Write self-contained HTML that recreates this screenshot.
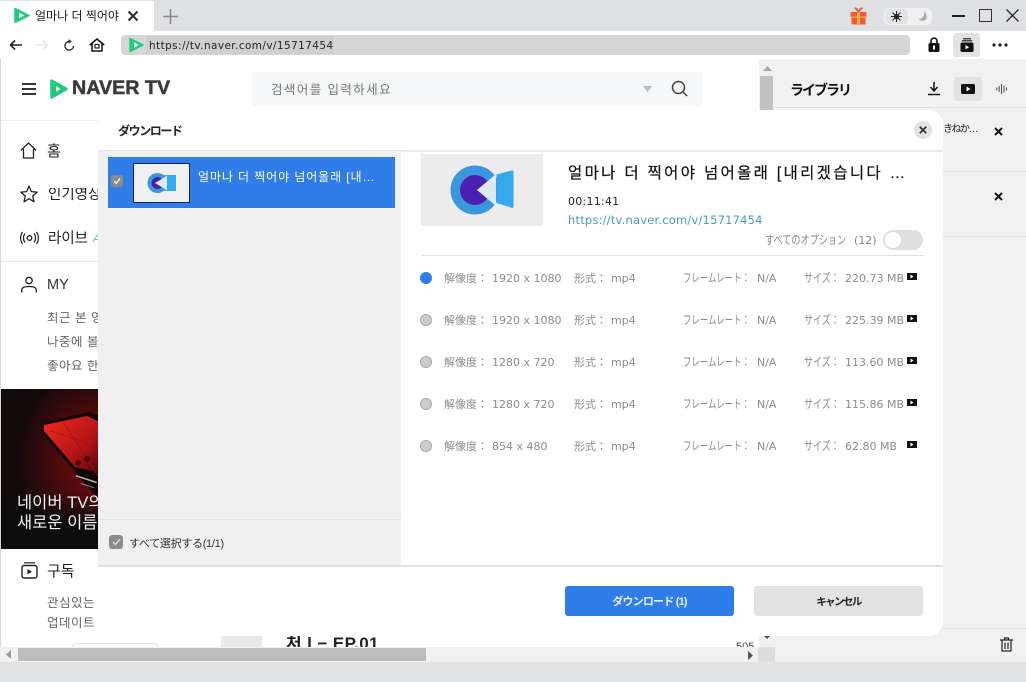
<!DOCTYPE html>
<html><head><meta charset="utf-8">
<style>
html,body{margin:0;padding:0;width:1026px;height:682px;overflow:hidden;background:#fff}
body{position:relative;font-family:"Liberation Sans","Noto Sans CJK KR",sans-serif;color:#222}
.a{position:absolute}
.t{position:absolute;white-space:nowrap;line-height:1}
.jp{font-family:"Liberation Sans","Noto Sans CJK JP",sans-serif}
svg{position:absolute;overflow:visible}
.g{color:#8c8c8c;font-size:11px;font-family:"DejaVu Sans","Noto Sans CJK JP",sans-serif}
.f{font-size:12px;transform-origin:left;transform:scaleX(.7)}
.s{font-size:12px;transform-origin:left;transform:scaleX(.75)}
</style></head><body>

<!-- tab bar -->
<div class="a" style="left:0;top:0;width:1026px;height:31px;background:#dfe0e2"></div>
<div class="a" style="left:0;top:1px;width:154px;height:30px;background:#fff"></div>
<svg style="left:14px;top:7px" width="16" height="17" viewBox="0 0 16 17"><path d="M1 1.5 15 8.5 1 15.5Z" fill="#1fcb78" stroke="#1fcb78" stroke-width="1.5" stroke-linejoin="round"/><path d="M5 5.5 10.5 8.5 5 11.5Z" fill="#fff"/></svg>
<div class="t" style="left:35px;top:10px;font-size:12px;color:#222">얼마나 더 찍어야</div>
<svg style="left:127px;top:10px" width="12" height="12"><path d="M1.5 1.5 10.5 10.5M10.5 1.5 1.5 10.5" stroke="#333" stroke-width="2.2"/></svg>
<svg style="left:163px;top:9px" width="15" height="15"><path d="M7.5 0V15M0 7.5H15" stroke="#8a8a8a" stroke-width="1.5"/></svg>
<!-- gift -->
<svg style="left:850px;top:7px" width="17" height="18"><rect x="0.5" y="5" width="16" height="4.5" fill="#f05a3c"/><rect x="1.5" y="10.5" width="14" height="7" fill="#f05a3c"/><rect x="7" y="5" width="3" height="13" fill="#f5b13d"/><rect x="1" y="9.5" width="15" height="1.2" fill="#f5b13d"/><path d="M8.5 5C5 1 4.5 1 5.5 1S8 3 8.5 5C9 3 11 1 12 1S12 1 8.5 5Z" fill="none" stroke="#f05a3c" stroke-width="1.2"/></svg>
<!-- theme toggle -->
<div class="a" style="left:884px;top:8px;width:48px;height:17px;background:#f0f0f2;border-radius:5px"></div>
<div class="a" style="left:886px;top:9px;width:22px;height:15px;background:#e2e3e5;border-radius:4px"></div>
<svg style="left:891px;top:11px" width="11" height="11" viewBox="0 0 11 11"><circle cx="5.5" cy="5.5" r="2.6" fill="#222"/><path d="M5.5 0V11M0 5.5H11M1.6 1.6 9.4 9.4M9.4 1.6 1.6 9.4" stroke="#222" stroke-width="1"/></svg>
<svg style="left:918px;top:11px" width="9" height="11" viewBox="0 0 9 11"><path d="M6 .5C7 4 5 7.5 .8 8 3 11 8.5 10.5 8.7 6 8.8 3.500 7.500 1.300 6 .5Z" fill="#aaa"/></svg>
<!-- win controls -->
<div class="a" style="left:952px;top:15px;width:13px;height:1.500px;background:#222"></div>
<div class="a" style="left:979px;top:9px;width:11px;height:11px;border:1.500px solid #333"></div>
<svg style="left:1006px;top:9px" width="13" height="13"><path d="M.5.5 12.500 12.500M12.500.5 .5 12.500" stroke="#222" stroke-width="1.300"/></svg>

<!-- toolbar -->
<svg style="left:9px;top:39px" width="13" height="12"><path d="M13 6H1.500M6 1.500 1.500 6 6 10.500" fill="none" stroke="#222" stroke-width="1.600"/></svg>
<svg style="left:36px;top:39px" width="13" height="12"><path d="M0 6H11.500M7 1.500 11.500 6 7 10.500" fill="none" stroke="#e8e8e8" stroke-width="1.600"/></svg>
<svg style="left:63px;top:39px" width="12" height="13" viewBox="0 0 12 13"><path d="M6.500 2.500A4.300 4.300 0 1 0 10.500 7" fill="none" stroke="#333" stroke-width="1.400"/><path d="M5.500 0 9 2.500 5.500 4.800Z" fill="#333"/></svg>
<svg style="left:89px;top:38px" width="16" height="14" viewBox="0 0 16 14"><path d="M.8 7 8 1 15.200 7M3 5.500V13H13V5.500" fill="none" stroke="#111" stroke-width="1.500"/><rect x="6" y="6.500" width="4" height="3.500" fill="none" stroke="#111" stroke-width="1.100"/></svg>
<div class="a" style="left:121px;top:35px;width:789px;height:20px;background:#d6d6d6;border-radius:4px"></div>
<div class="a" style="left:146px;top:36px;width:188px;height:18px;background:#cfcfcf"></div>
<svg style="left:129px;top:37px" width="15" height="16" viewBox="0 0 15 16"><path d="M1 1.500 14 8 1 14.500Z" fill="#1fcb78" stroke="#1fcb78" stroke-width="1.500" stroke-linejoin="round"/><path d="M5 5 9.800 8 5 11Z" fill="#dff7ea"/></svg>
<div class="t" style="left:149px;top:40px;font-size:11px;letter-spacing:.45px;color:#222;font-family:'DejaVu Sans',sans-serif;transform-origin:left;transform:scaleX(.95)">https://tv.naver.com/v/15717454</div>
<svg style="left:928px;top:37px" width="12" height="15" viewBox="0 0 12 15"><path d="M3 6.500V4A3 3 0 0 1 9 4V6.500" fill="none" stroke="#111" stroke-width="1.600"/><rect x=".5" y="6" width="11" height="9" rx="1.500" fill="#111"/><rect x="5" y="8.500" width="2" height="4" fill="#fff"/></svg>
<div class="a" style="left:953px;top:33px;width:27px;height:24px;background:#e3e3e3;border-radius:3px"></div>
<svg style="left:960px;top:38px" width="14" height="14" viewBox="0 0 14 14"><path d="M3 .8H11M1.800 2.800H12.200" stroke="#111" stroke-width="1.100"/><rect x=".5" y="4.500" width="13" height="9.500" rx="1.500" fill="#111"/><path d="M5.500 7 9 9.200 5.500 11.400Z" fill="#fff"/></svg>
<svg style="left:992px;top:43px" width="16" height="4"><circle cx="2" cy="2" r="1.600" fill="#222"/><circle cx="8" cy="2" r="1.600" fill="#222"/><circle cx="14" cy="2" r="1.600" fill="#222"/></svg>

<!-- page -->
<div class="a" style="left:0;top:59px;width:1px;height:588px;background:#d8d8d8"></div>
<div class="a" style="left:22px;top:83px;width:14px;height:1.500px;background:#333;box-shadow:0 5px 0 #333,0 10px 0 #333"></div>
<svg style="left:50px;top:79px" width="18" height="20" viewBox="0 0 18 20"><path d="M1.500 1.500 16.500 10 1.500 18.500Z" fill="#1fcb78" stroke="#1fcb78" stroke-width="2.500" stroke-linejoin="round"/><path d="M6 7 10.500 10 6 13Z" fill="#fff"/></svg>
<div class="t" style="left:72px;top:79px;font-size:19.700px;font-weight:bold;color:#3a3a3a;-webkit-text-stroke:.5px #3a3a3a">NAVER TV</div>
<div class="a" style="left:252px;top:72px;width:450px;height:34px;background:#f6f7f8"></div>
<div class="t" style="left:271px;top:84px;font-size:12.500px;color:#777;letter-spacing:1.400px">검색어를 입력하세요</div>
<svg style="left:643px;top:86px" width="9" height="6"><path d="M0 0H9L4.500 6Z" fill="#bbb"/></svg>
<svg style="left:671px;top:80px" width="17" height="17"><circle cx="7.500" cy="7.500" r="6" fill="none" stroke="#444" stroke-width="1.500"/><path d="M12 12 16 16" stroke="#444" stroke-width="1.500"/></svg>
<div class="a" style="left:1px;top:120px;width:97px;height:1px;background:#eee"></div>

<svg style="left:20px;top:142px" width="17" height="17" viewBox="0 0 17 17"><path d="M.8 8.500 8.500 1 16.200 8.500M3.500 7V16H13.500V7" fill="none" stroke="#222" stroke-width="1.300"/></svg>
<div class="t" style="left:47px;top:144px;font-size:15px;color:#222">홈</div>
<svg style="left:20px;top:185px" width="18" height="18" viewBox="0 0 18 18"><path d="M9 1 11.300 6.600 17.200 7.100 12.700 11 14 16.800 9 13.700 4 16.800 5.300 11 .8 7.100 6.700 6.600Z" fill="none" stroke="#222" stroke-width="1.300" stroke-linejoin="round"/></svg>
<div class="t" style="left:48px;top:188px;font-size:14.500px;color:#222;width:50px;overflow:hidden">인기영상</div>
<svg style="left:20px;top:231px" width="19" height="14" viewBox="0 0 19 14"><circle cx="9.500" cy="7" r="2.300" fill="none" stroke="#222" stroke-width="1.300"/><path d="M5 2.500C3 5 3 9 5 11.500M14 2.500C16 5 16 9 14 11.500M2.500 1C0 4.500 0 9.500 2.500 13M16.500 1C19 4.500 19 9.500 16.500 13" fill="none" stroke="#222" stroke-width="1.200"/></svg>
<div class="t" style="left:48px;top:232px;font-size:14.500px;color:#222">라이브</div>
<div class="t" style="left:93px;top:234px;font-size:11px;color:#3fce8f;font-style:italic">A</div>
<div class="a" style="left:1px;top:261px;width:97px;height:1px;background:#e8e8e8"></div>
<svg style="left:21px;top:276px" width="16" height="17" viewBox="0 0 16 17"><circle cx="8" cy="4.500" r="3.200" fill="none" stroke="#222" stroke-width="1.300"/><path d="M.8 16.500V14C.8 11.500 3 10.500 8 10.500S15.200 11.500 15.200 14V16.500" fill="none" stroke="#222" stroke-width="1.300"/></svg>
<div class="t" style="left:47px;top:278px;font-size:14.500px;color:#333">MY</div>
<div class="t" style="left:47px;top:312px;font-size:12.500px;color:#666;letter-spacing:.5px;width:51px;overflow:hidden">최근 본 영상</div>
<div class="t" style="left:47px;top:336px;font-size:12.500px;color:#666;letter-spacing:.5px;width:51px;overflow:hidden">나중에 볼 영상</div>
<div class="t" style="left:47px;top:360px;font-size:12.500px;color:#666;letter-spacing:.5px;width:51px;overflow:hidden">좋아요 한 영상</div>

<!-- promo -->
<div class="a" style="left:1px;top:389px;width:97px;height:160px;overflow:hidden;background:radial-gradient(ellipse 80px 95px at 95px 70px,#7d0d13 0%,#4a0a0e 50%,#120a0b 100%)">
  <svg style="left:0;top:0" width="97" height="160" viewBox="0 0 97 160">
    <defs><linearGradient id="sc" x1="0" y1="0" x2="1" y2="1"><stop offset="0" stop-color="#f22a1e"/><stop offset=".65" stop-color="#b01316"/><stop offset="1" stop-color="#4a070b"/></linearGradient></defs>
    <path d="M40 34 88 23 99 27V108L92 104 41 44Z" fill="#120607"/>
    <path d="M43 36 86 27 99 33V84L74 78 43 42Z" fill="url(#sc)"/>
    <path d="M50 42 99 58M62 33 99 90" stroke="#9a1014" stroke-width=".6" fill="none"/>
    <circle cx="77" cy="74" r="3" fill="#4d0a0d"/><circle cx="86" cy="70" r="3" fill="#4d0a0d"/>
    <rect x="75" y="86" width="22" height="1.500" fill="#b5b5b5" transform="rotate(18 75 86)"/>
    <rect x="80" y="94" width="14" height="1" fill="#888" transform="rotate(18 80 94)"/>
  </svg>
  <div class="a" style="left:0;top:105px;width:97px;height:55px;background:linear-gradient(rgba(15,10,10,0),#0c0c0c 60%)"></div>
  <div class="t" style="left:16px;top:106px;font-size:16.500px;color:#f2f2f2">네이버 TV의</div>
  <div class="t" style="left:16px;top:126px;font-size:16.500px;color:#f2f2f2">새로운 이름</div>
</div>

<svg style="left:21px;top:562px" width="17" height="17" viewBox="0 0 17 17"><path d="M3 .8H14" stroke="#222" stroke-width="1.200"/><rect x="1" y="3.500" width="15" height="12.500" rx="2" fill="none" stroke="#222" stroke-width="1.400"/><path d="M6.500 7 11 9.700 6.500 12.400Z" fill="#222"/></svg>
<div class="t" style="left:47px;top:564px;font-size:15px;color:#222">구독</div>
<div class="t" style="left:47px;top:597px;font-size:12.500px;color:#666;letter-spacing:.5px;width:47px;overflow:hidden">관심있는 채널</div>
<div class="t" style="left:47px;top:617px;font-size:12.500px;color:#666;letter-spacing:.5px;width:47px;overflow:hidden">업데이트 소식</div>
<div class="a" style="left:72px;top:643px;width:84px;height:4px;border:1px solid #e5e5e5;border-bottom:0;border-radius:4px 4px 0 0"></div>
<div class="a" style="left:221px;top:636px;width:41px;height:11px;background:#e9e9e9"></div>
<div class="a" style="left:286px;top:636px;width:110px;height:11px;overflow:hidden"><div class="t" style="left:0;top:-1px;font-size:17px;font-weight:bold;color:#222;letter-spacing:.4px">처 l − EP.01</div></div>
<div class="a" style="left:736px;top:642px;width:22px;height:5px;overflow:hidden"><div class="t" style="left:0;top:0;font-size:11px;color:#444">505</div></div>

<!-- scrollbars -->
<div class="a" style="left:0;top:647px;width:759px;height:15px;background:#f1f1f1"></div>
<div class="a" style="left:18px;top:648px;width:408px;height:13px;background:#bdbdbd"></div>
<svg style="left:6px;top:650px" width="5" height="9"><path d="M5 0V9L0 4.500Z" fill="#999"/></svg>
<svg style="left:748px;top:651px" width="5" height="9"><path d="M0 0V9L5 4.500Z" fill="#555"/></svg>
<div class="a" style="left:759px;top:59px;width:16px;height:588px;background:#f1f1f1"></div>
<svg style="left:763px;top:66px" width="9" height="5"><path d="M0 5H9L4.500 0Z" fill="#aaa"/></svg>
<div class="a" style="left:760px;top:76px;width:13px;height:40px;background:#c1c1c1"></div>
<svg style="left:763px;top:635px" width="8" height="4"><path d="M0 0H8L4 4Z" fill="#555"/></svg>
<div class="a" style="left:758px;top:647px;width:17px;height:15px;background:#dcdcdc"></div>

<!-- right panel -->
<div class="a" style="left:775px;top:59px;width:251px;height:603px;background:#f1f1f1"></div>
<div class="a" style="left:775px;top:107px;width:251px;height:1px;background:#e0e0e0"></div>
<div class="a" style="left:943px;top:171px;width:83px;height:1px;background:#e0e0e0"></div>
<div class="a" style="left:943px;top:236px;width:83px;height:1px;background:#e0e0e0"></div>
<div class="a" style="left:775px;top:628px;width:251px;height:1px;background:#e0e0e0"></div>
<div class="t jp" style="left:790px;top:83px;font-size:14px;font-weight:bold;color:#111;letter-spacing:-2px">ライブラリ</div>
<svg style="left:928px;top:82px" width="12" height="14"><path d="M6 0V8M2.500 5 6 9 9.500 5" fill="none" stroke="#111" stroke-width="1.500"/><path d="M0 12.500H12" stroke="#111" stroke-width="1.500"/></svg>
<div class="a" style="left:954px;top:77px;width:28px;height:24px;background:#e3e3e3;border-radius:2px"></div>
<svg style="left:961px;top:84px" width="14" height="10"><rect width="14" height="10" rx="1.500" fill="#111"/><path d="M5.500 2.500 9.500 5 5.500 7.500Z" fill="#fff"/></svg>
<svg style="left:996px;top:83px" width="12" height="12"><path d="M.8 4.500V7.500M3.200 3V9M5.500 1V11M8 2.500V9.500M10.500 4.500V7.500" stroke="#555" stroke-width="1.100"/></svg>
<div class="t jp" style="left:943px;top:125px;font-size:10px;color:#222;letter-spacing:-1.500px">きねか…</div>
<svg style="left:994px;top:127px" width="9" height="9"><path d="M1 1 8 8M8 1 1 8" stroke="#111" stroke-width="2"/></svg>
<svg style="left:994px;top:192px" width="9" height="9"><path d="M1 1 8 8M8 1 1 8" stroke="#111" stroke-width="2"/></svg>
<svg style="left:1000px;top:637px" width="13" height="15" viewBox="0 0 13 15"><path d="M0 3H13M4.500 3V1H8.500V3M2 3.500V14H11V3.500M5 5.500V12M8 5.500V12" fill="none" stroke="#222" stroke-width="1.200"/></svg>

<!-- status bar -->
<div class="a" style="left:0;top:662px;width:1026px;height:20px;background:#e1e2e4"></div>

<!-- modal -->
<div class="a" style="left:98px;top:110px;width:845px;height:526px;background:#fff;border-radius:0 14px 14px 0;overflow:hidden">
  <div class="a" style="left:0;top:40px;width:845px;height:1px;background:#e4e8ec"></div>
  <div class="a" style="left:0;top:41px;width:303px;height:414px;background:#f0f0f0"></div>
  <div class="a" style="left:0;top:455px;width:845px;height:1.500px;background:#e2e2e2"></div>
  <div class="a" style="left:0;top:409px;width:303px;height:1px;background:#e3e3e3"></div>
  <div class="a" style="left:303px;top:41px;width:542px;height:1px;background:#e8e8e8"></div>
</div>
<div class="t jp" style="left:118px;top:125px;font-size:12px;font-weight:bold;color:#222;letter-spacing:-1.400px">ダウンロード</div>
<div class="a" style="left:914px;top:121px;width:18px;height:18px;border-radius:50%;background:#e2e2e2"></div>
<svg style="left:919px;top:126px" width="8" height="8"><path d="M.8.8 7.200 7.200M7.200.8 .8 7.200" stroke="#333" stroke-width="1.800"/></svg>

<!-- list item -->
<div class="a" style="left:108px;top:157px;width:287px;height:51px;background:#2f7de8"></div>
<div class="a" style="left:111px;top:175px;width:12px;height:12px;background:#8a8a8a;border-radius:2px"></div>
<svg style="left:113px;top:177px" width="8" height="8"><path d="M1 4 3.200 6.500 7 1.500" fill="none" stroke="#fff" stroke-width="1.300"/></svg>
<div class="a" style="left:133px;top:163px;width:55px;height:38px;background:#eef0f2;border:1.500px solid #14225e"></div>
<svg style="left:147px;top:172px" width="30" height="22" viewBox="0 0 30 22"><rect x="17" y="3" width="12" height="16" rx="1" fill="#35a8ee"/><path d="M29 3 16 11 29 19Z" fill="#35a8ee"/><circle cx="10.500" cy="11" r="10" fill="#3a97dc"/><circle cx="10.500" cy="11" r="6" fill="#4a20b0"/><path d="M8 11 22 2.500V19.500Z" fill="#dfe9f3"/><rect x="20" y="3" width="9" height="16" rx="1" fill="#35a8ee"/></svg>
<div class="t" style="left:198px;top:171px;font-size:12px;color:#fff;letter-spacing:.9px">얼마나 더 찍어야 넘어올래 [내…</div>

<!-- select all -->
<div class="a" style="left:109px;top:535px;width:14px;height:14px;background:#8c8c8c;border-radius:3px"></div>
<svg style="left:112px;top:538px" width="9" height="8"><path d="M1 4 3.500 6.500 8 1" fill="none" stroke="#e8e8e8" stroke-width="1.200"/></svg>
<div class="t jp" style="left:129px;top:539px;font-size:11px;color:#333;letter-spacing:-.3px">すべて選択する(1/1)</div>

<!-- detail -->
<div class="a" style="left:421px;top:154px;width:122px;height:72px;background:#ececec"></div>
<svg style="left:450px;top:165px" width="64" height="50" viewBox="0 0 64 50"><path d="M62 5.500C63 5 63.500 6 63.500 7V41C63.500 43 62.500 43.500 61 42.500L42 31V17Z" fill="#35a8ee"/><circle cx="25" cy="25" r="24.500" fill="#3a97dc"/><circle cx="25" cy="25" r="15" fill="#4a20b0"/><path d="M27 25 46 9 V41Z" fill="#dfe9f3"/><path d="M46.500 9.500 61.500 5.500 63.500 7V41L61 42.500 46.500 38Z" fill="#35a8ee"/></svg>
<div class="t" style="left:568px;top:166px;font-size:15.500px;color:#111;letter-spacing:2.320px;-webkit-text-stroke:.2px #111">얼마나 더 찍어야 넘어올래 [내리겠습니다 …</div>
<div class="t" style="left:568px;top:196px;font-size:11px;color:#222;font-family:'DejaVu Sans',sans-serif;letter-spacing:.25px">00:11:41</div>
<div class="t" style="left:568px;top:215px;font-size:11.500px;color:#4a9cbc;font-family:'DejaVu Sans',sans-serif;letter-spacing:.2px">https://tv.naver.com/v/15717454</div>
<div class="t jp" style="left:765px;top:234px;font-size:12px;color:#888;transform-origin:left;transform:scaleX(.76)">すべてのオプション</div>
<div class="t" style="left:854px;top:235px;font-size:11px;color:#888;font-family:'DejaVu Sans',sans-serif">(12)</div>
<div class="a" style="left:883px;top:230px;width:40px;height:20px;background:#dedede;border-radius:10px"></div>
<div class="a" style="left:885px;top:232px;width:16px;height:16px;background:#fff;border-radius:50%"></div>
<div class="a" style="left:421px;top:255px;width:503px;height:1px;background:#e0e0e0"></div>

<!-- rows -->
<div class="a" style="left:420px;top:272px;width:12px;height:12px;background:#2f7de8;border-radius:50%"></div>
<div class="t g" style="left:444px;top:273px">解像度：</div><div class="t g" style="left:492px;top:273px">1920 x 1080</div><div class="t g" style="left:574px;top:273px">形式：</div><div class="t g" style="left:611px;top:273px">mp4</div><div class="t g f" style="left:683px;top:272px">フレームレート：</div><div class="t g" style="left:757px;top:273px">N/A</div><div class="t g s" style="left:804px;top:272px">サイズ：</div><div class="t g" style="left:845px;top:273px">220.73 MB</div>
<svg style="left:907px;top:273px" width="10" height="7"><rect width="10" height="7" fill="#111"/><path d="M3.500 1.500 6.500 3.500 3.500 5.500Z" fill="#fff"/></svg>

<div class="a" style="left:420px;top:314px;width:10px;height:10px;background:#ccc;border:1px solid #aaa;border-radius:50%"></div>
<div class="t g" style="left:444px;top:315px">解像度：</div><div class="t g" style="left:492px;top:315px">1920 x 1080</div><div class="t g" style="left:574px;top:315px">形式：</div><div class="t g" style="left:611px;top:315px">mp4</div><div class="t g f" style="left:683px;top:314px">フレームレート：</div><div class="t g" style="left:757px;top:315px">N/A</div><div class="t g s" style="left:804px;top:314px">サイズ：</div><div class="t g" style="left:845px;top:315px">225.39 MB</div>
<svg style="left:907px;top:315px" width="10" height="7"><rect width="10" height="7" fill="#111"/><path d="M3.500 1.500 6.500 3.500 3.500 5.500Z" fill="#fff"/></svg>

<div class="a" style="left:420px;top:356px;width:10px;height:10px;background:#ccc;border:1px solid #aaa;border-radius:50%"></div>
<div class="t g" style="left:444px;top:357px">解像度：</div><div class="t g" style="left:492px;top:357px">1280 x 720</div><div class="t g" style="left:574px;top:357px">形式：</div><div class="t g" style="left:611px;top:357px">mp4</div><div class="t g f" style="left:683px;top:356px">フレームレート：</div><div class="t g" style="left:757px;top:357px">N/A</div><div class="t g s" style="left:804px;top:356px">サイズ：</div><div class="t g" style="left:845px;top:357px">113.60 MB</div>
<svg style="left:907px;top:357px" width="10" height="7"><rect width="10" height="7" fill="#111"/><path d="M3.500 1.500 6.500 3.500 3.500 5.500Z" fill="#fff"/></svg>

<div class="a" style="left:420px;top:398px;width:10px;height:10px;background:#ccc;border:1px solid #aaa;border-radius:50%"></div>
<div class="t g" style="left:444px;top:399px">解像度：</div><div class="t g" style="left:492px;top:399px">1280 x 720</div><div class="t g" style="left:574px;top:399px">形式：</div><div class="t g" style="left:611px;top:399px">mp4</div><div class="t g f" style="left:683px;top:398px">フレームレート：</div><div class="t g" style="left:757px;top:399px">N/A</div><div class="t g s" style="left:804px;top:398px">サイズ：</div><div class="t g" style="left:845px;top:399px">115.86 MB</div>
<svg style="left:907px;top:399px" width="10" height="7"><rect width="10" height="7" fill="#111"/><path d="M3.500 1.500 6.500 3.500 3.500 5.500Z" fill="#fff"/></svg>

<div class="a" style="left:420px;top:440px;width:10px;height:10px;background:#ccc;border:1px solid #aaa;border-radius:50%"></div>
<div class="t g" style="left:444px;top:441px">解像度：</div><div class="t g" style="left:492px;top:441px">854 x 480</div><div class="t g" style="left:574px;top:441px">形式：</div><div class="t g" style="left:611px;top:441px">mp4</div><div class="t g f" style="left:683px;top:440px">フレームレート：</div><div class="t g" style="left:757px;top:441px">N/A</div><div class="t g s" style="left:804px;top:440px">サイズ：</div><div class="t g" style="left:845px;top:441px">62.80 MB</div>
<svg style="left:907px;top:441px" width="10" height="7"><rect width="10" height="7" fill="#111"/><path d="M3.500 1.500 6.500 3.500 3.500 5.500Z" fill="#fff"/></svg>

<!-- buttons -->
<div class="a jp" style="left:565px;top:586px;width:169px;height:30px;background:#2f7de8;border-radius:3px;color:#e8f0fb;font-size:11px;font-weight:bold;line-height:32px;text-align:center;letter-spacing:-.8px">ダウンロード (1)</div>
<div class="a jp" style="left:754px;top:586px;width:169px;height:30px;background:#e2e2e2;border-radius:3px;color:#222;font-size:10.500px;font-weight:bold;line-height:32px;text-align:center;letter-spacing:-1.600px">キャンセル</div>

</body></html>
